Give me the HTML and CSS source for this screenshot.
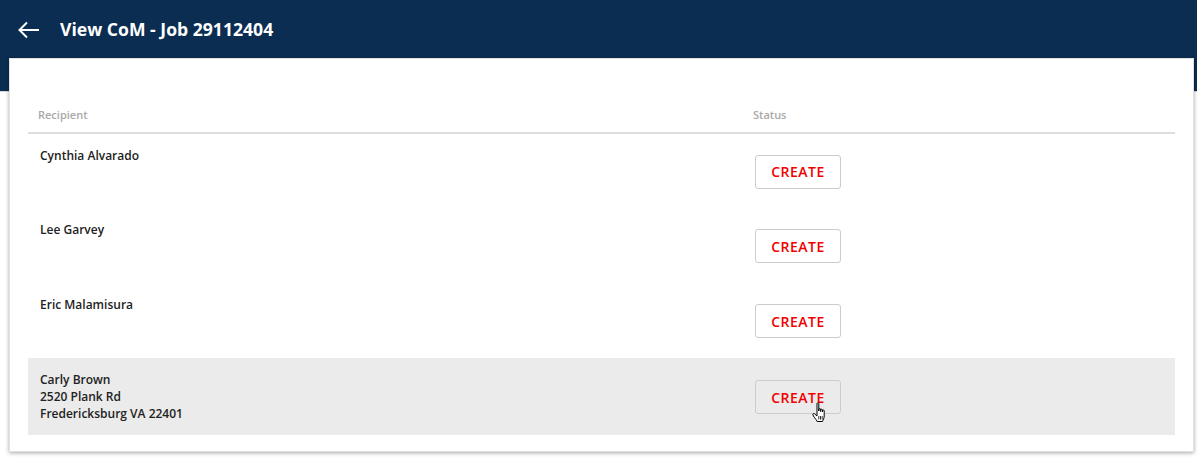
FILE: index.html
```html
<!DOCTYPE html>
<html>
<head>
<meta charset="utf-8">
<link rel="stylesheet" href="styles.css">
</head>
<body>
<div class="app">
  <header class="toolbar">
    <svg class="back" width="22" height="18" viewBox="0 0 22 18">
      <path d="M1.5 9 H21 M9 1.5 L1.5 9 L9 16.5" fill="none" stroke="#fff" stroke-width="2"/>
    </svg>
    <h1 class="title">View CoM - Job 29112404</h1>
  </header>
  <main class="card">
    <table class="grid">
      <thead>
        <tr><th class="col-recipient">Recipient</th><th class="col-status">Status</th></tr>
      </thead>
      <tbody>
        <tr><td class="recipient">Cynthia Alvarado</td><td class="status"><button class="btn">CREATE</button></td></tr>
        <tr><td class="recipient">Lee Garvey</td><td class="status"><button class="btn">CREATE</button></td></tr>
        <tr><td class="recipient">Eric Malamisura</td><td class="status"><button class="btn">CREATE</button></td></tr>
        <tr class="hover"><td class="recipient">Carly Brown<br>2520 Plank Rd<br>Fredericksburg VA 22401</td><td class="status"><button class="btn">CREATE<svg class="cursor" width="18" height="22" viewBox="0 0 18 22"><path d="M5 1.5 C5 0.7 6.8 0.7 6.8 1.5 V9 V7.2 C6.8 6.4 8.6 6.4 8.6 7.2 V9.5 V7.8 C8.6 7 10.4 7 10.4 7.8 V10 V8.6 C10.4 7.8 12.2 7.8 12.2 8.6 V14 C12.2 16.5 11 18 10.5 19.5 H5.2 C4.6 18 3.5 17 2.2 15.2 L0.9 12.8 C0.4 11.8 1.7 11 2.5 11.8 L5 14 Z" fill="#fff" stroke="#000" stroke-width="1" stroke-linejoin="round"/><path d="M6.8 14 V17.5 M8.5 14 V17.5 M10.2 14 V17.5" stroke="#000" stroke-width="0.8"/></svg></button></td></tr>
      </tbody>
    </table>
  </main>
</div>
</body>
</html>
```
FILE: styles.css
```css
html, body {
  margin: 0;
  padding: 0;
  background: #ffffff;
}
body {
  font-family: "Open Sans", "Noto Sans", "Liberation Sans", sans-serif;
  width: 1197px;
  height: 462px;
  overflow: hidden;
}
.app {
  background: linear-gradient(to bottom, #0b2d52 0, #0b2d52 91px, #d6d6d6 91px, #d6d6d6 92px, #ffffff 92px);
  height: 462px;
}
.toolbar {
  height: 58px;
  display: flex;
  align-items: center;
  padding-left: 18px;
  box-sizing: border-box;
}
.back {
  display: block;
  margin-top: 1px;
}
.title {
  margin: 0 0 0 20px;
  color: #ffffff;
  font-size: 17.6px;
  font-weight: 700;
  line-height: 20px;
}
.card {
  margin: 0 3px 0 9px;
  height: 394px;
  box-sizing: border-box;
  background: #ffffff;
  border: 1px solid #e2e2e2;
  box-shadow: 0 1px 4px rgba(0,0,0,0.35);
  padding: 39px 18px 0 18px;
}
.grid {
  width: 100%;
  border-collapse: collapse;
  table-layout: fixed;
}
.col-recipient { width: 695px; }
th {
  text-align: left;
  font-size: 11px;
  font-weight: 600;
  color: #a9a9a9;
  line-height: 16px;
  padding: 9px 10px;
  border-bottom: 2px solid #dcdde0;
}
td {
  height: 75px;
  box-sizing: border-box;
  padding: 13px 12px;
  font-size: 12px;
  font-weight: 600;
  line-height: 17px;
  color: #222222;
}
td.recipient { vertical-align: top; }
td.status {
  vertical-align: middle;
  padding: 0 12px;
}
tr.hover td { background: #ebebeb; }
.btn {
  position: relative;
  display: block;
  width: 86px;
  height: 34px;
  box-sizing: border-box;
  border: 1px solid #cccccc;
  border-radius: 3px;
  background: transparent;
  color: #f20000;
  font-family: inherit;
  font-size: 14px;
  font-weight: 600;
  letter-spacing: 0.5px;
  padding: 0;
  margin-top: 1px;
}
.cursor {
  position: absolute;
  left: 56px;
  top: 21px;
}
```
